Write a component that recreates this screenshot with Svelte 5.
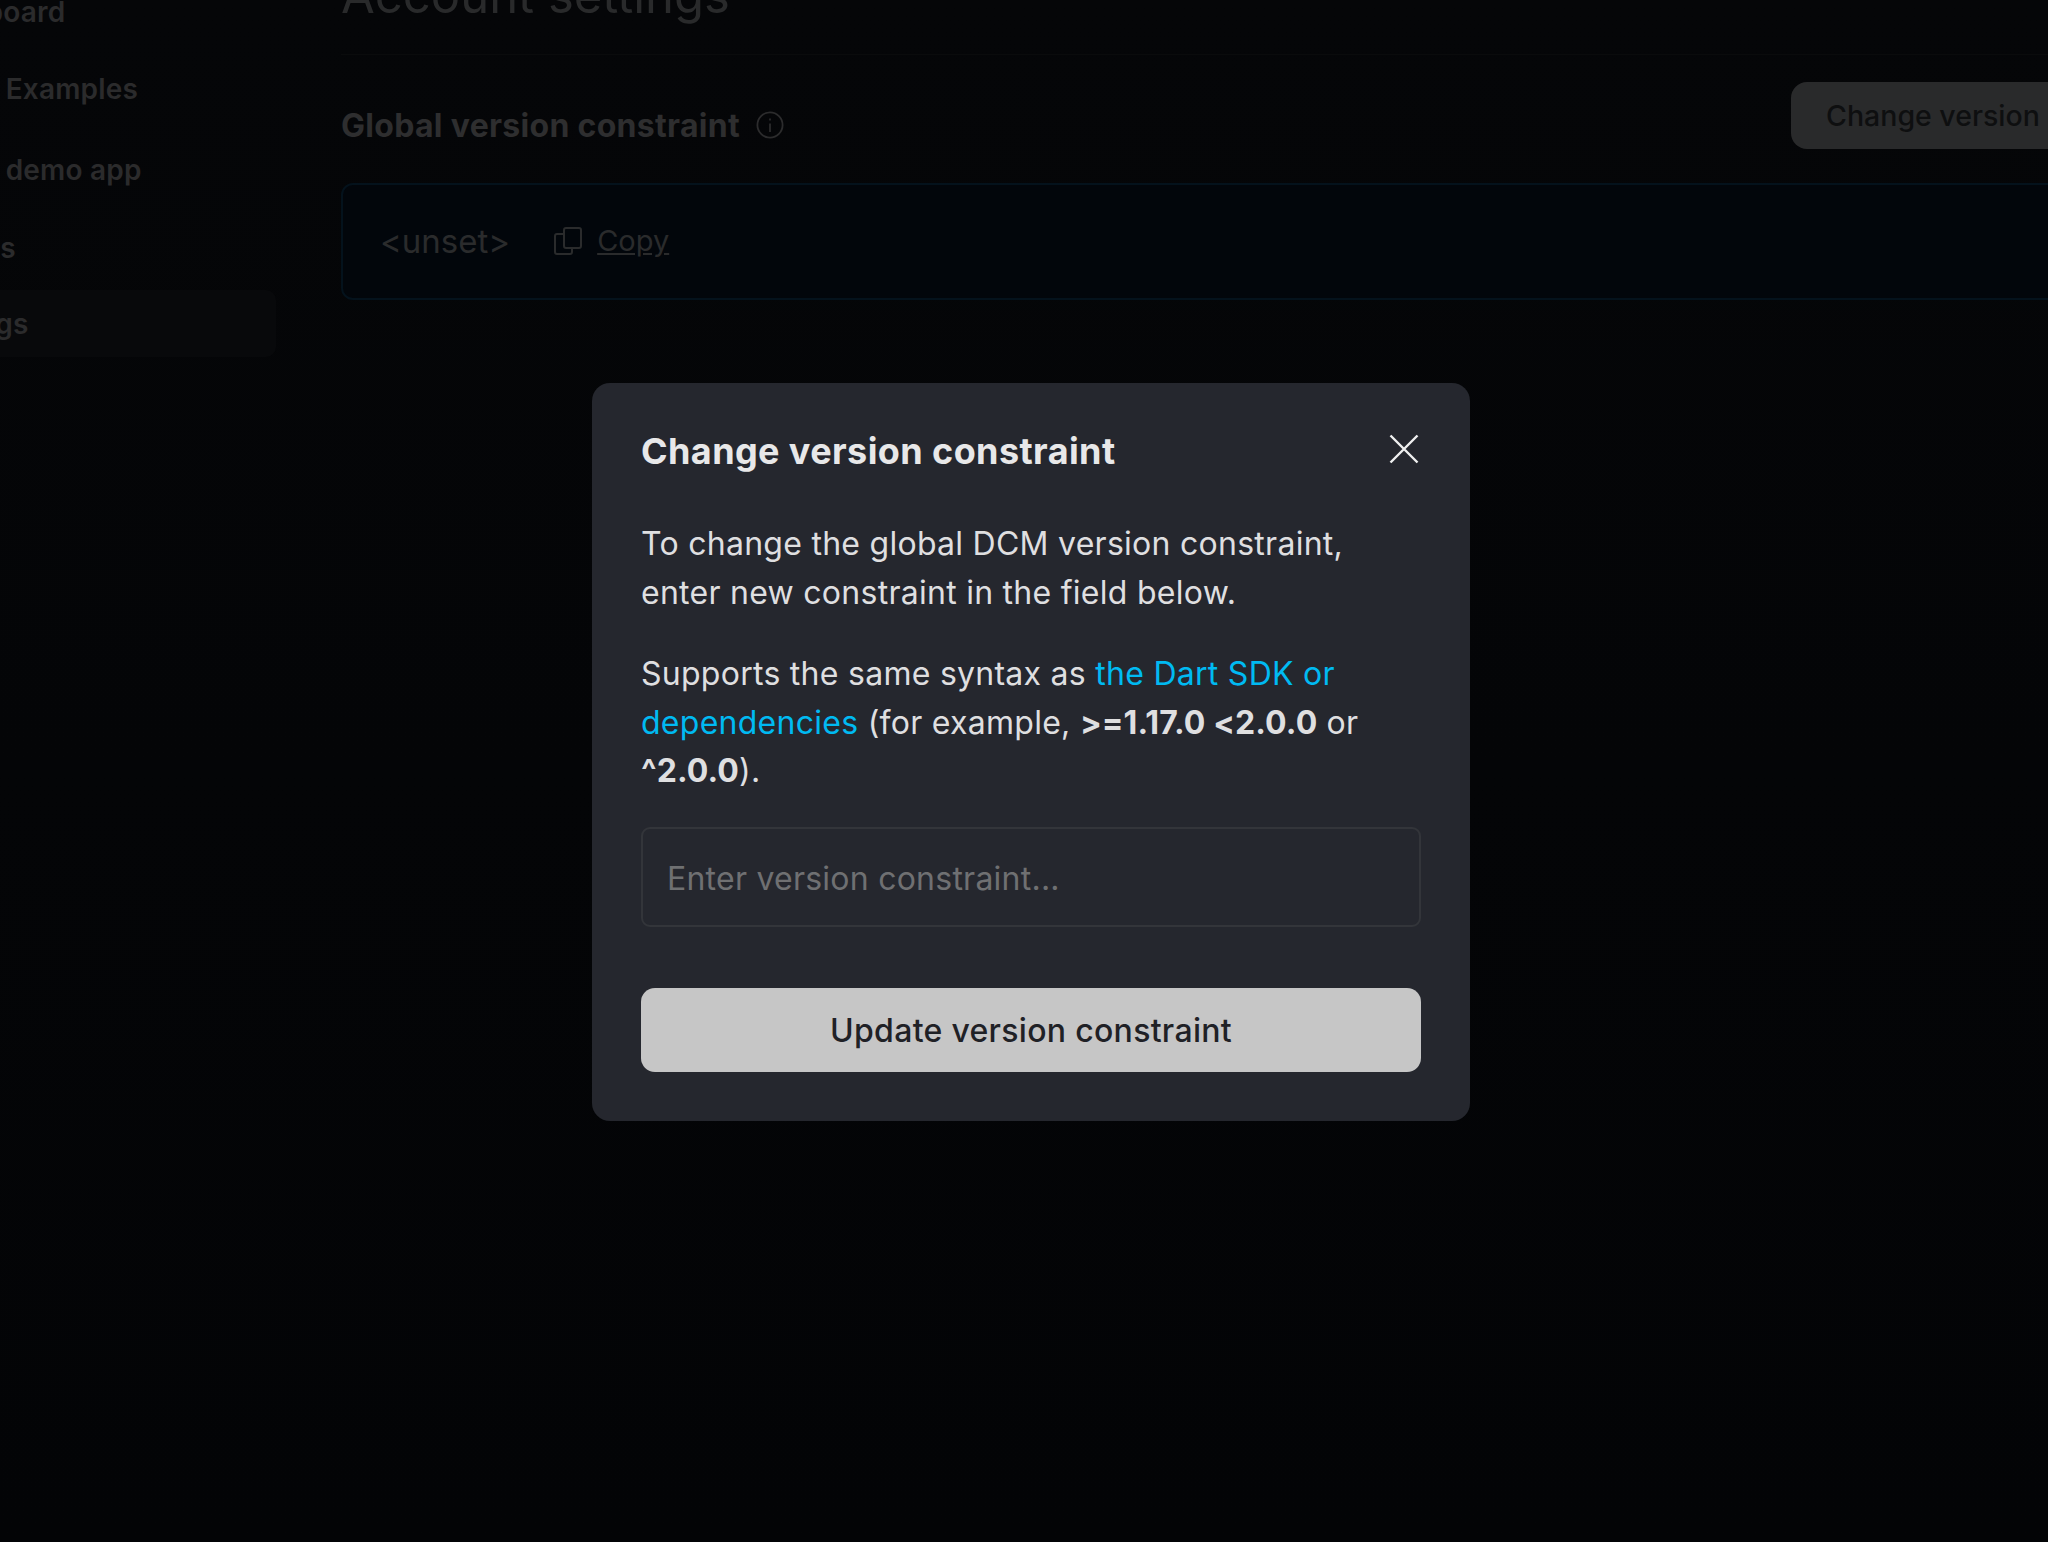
<script>
  const nav = [
    { prefix: '', label: 'Dashboard', cls: '' },
    { prefix: 'Rules', label: 'Examples', cls: '' },
    { prefix: 'Rules', label: 'demo app', cls: 'section' },
    { prefix: '', label: 'Groups', cls: '' },
    { prefix: '', label: 'Settings', cls: 'active' }
  ];
</script>

<div class="screen">
  <div class="page">
    <nav class="sidebar">
      {#each nav as item}
        <div class="item {item.cls}">{#if item.prefix}<span class="prefix">{item.prefix}</span>{/if}<span>{item.label}</span></div>
      {/each}
    </nav>
    <main class="main">
      <h1>Account settings</h1>
      <div class="section-head">
        <div class="section-title">
          <h2>Global version constraint</h2>
          <svg class="info" viewBox="0 0 28 28" width="28" height="28" fill="none" stroke="currentColor" stroke-width="1.8">
            <circle cx="14" cy="14" r="12.6" />
            <path d="M14 12.5V21" />
            <path d="M14 7.5V9.5" />
          </svg>
        </div>
        <button class="change">Change version constraint</button>
      </div>
      <div class="card">
        <span class="value">&lt;unset&gt;</span>
        <svg class="copy" viewBox="0 0 28 28" width="28" height="28" fill="none" stroke="currentColor" stroke-width="2">
          <path d="M9 7H3a2 2 0 0 0-2 2v16a2 2 0 0 0 2 2h13a2 2 0 0 0 2-2v-4" />
          <rect x="10" y="1" width="17" height="20" rx="2" />
        </svg>
        <a class="copy-link" href="#copy">Copy</a>
      </div>
    </main>
  </div>

  <div class="overlay">
    <div class="modal">
      <div class="modal-head">
        <h3>Change version constraint</h3>
        <svg class="close" viewBox="0 0 30 30" width="30" height="30" fill="none" stroke="currentColor" stroke-width="2.4">
          <path d="M1.5 1.5L28.5 28.5M28.5 1.5L1.5 28.5" />
        </svg>
      </div>
      <p>To change the global DCM version constraint,<br />enter new constraint in the field below.</p>
      <p>Supports the same syntax as <a href="#dart">the Dart SDK or dependencies</a> (for example, <b>&gt;=1.17.0 &lt;2.0.0</b> or <b>^2.0.0</b>).</p>
      <input class="field" placeholder="Enter version constraint..." />
      <button class="submit">Update version constraint</button>
    </div>
  </div>
</div>

<style>
  :global(body) {
    margin: 0;
    background: #040507;
  }
  .screen {
    position: relative;
    width: 2048px;
    height: 1542px;
    overflow: hidden;
    background: linear-gradient(#050608, #030406);
    font-family: Inter, "Liberation Sans", sans-serif;
  }
  .page {
    display: flex;
    margin-left: -84px;
    width: 2298px;
  }
  .sidebar {
    width: 360px;
    flex: none;
    margin-top: -22px;
    display: flex;
    flex-direction: column;
    gap: 10px;
  }
  .item {
    height: 67px;
    display: flex;
    align-items: center;
    border-radius: 10px;
    color: #2b2b2c;
    font-size: 28px;
    font-weight: 600;
    letter-spacing: 0.2px;
    white-space: nowrap;
  }
  .prefix {
    margin-right: 14px;
  }
  .item.section {
    margin-top: 4px;
    margin-bottom: 1px;
  }
  .item.active {
    margin-top: -1px;
    background: #08090b;
  }
  .main {
    margin-left: 65px;
    flex: 1;
    margin-top: -34px;
  }
  h1 {
    margin: 0;
    height: 88px;
    line-height: 60px;
    font-size: 49px;
    font-weight: 400;
    color: #292a2b;
    border-bottom: 1px solid #0a0b0c;
  }
  .section-head {
    display: flex;
    justify-content: space-between;
    margin-top: 27px;
    height: 101px;
  }
  .section-title {
    display: flex;
    align-items: center;
    gap: 16px;
    height: 86px;
  }
  h2 {
    margin: 0;
    font-size: 32px;
    font-weight: 700;
    letter-spacing: 0.3px;
    color: #2e2e2f;
  }
  .info {
    color: #2c2c2d;
  }
  .change {
    margin-left: auto;
    width: 423px;
    height: 67px;
    padding: 0 0 0 35px;
    text-align: left;
    border: 0;
    border-radius: 16px;
    background: #292a2b;
    color: #0e0f10;
    font: 500 28.5px Inter, "Liberation Sans", sans-serif;
    white-space: nowrap;
  }
  .card {
    display: flex;
    align-items: center;
    height: 117px;
    padding: 0 0 2px 37px;
    box-sizing: border-box;
    background: #02060b;
    border: 2px solid #04121c;
    border-radius: 12px;
    color: #2a2b2c;
    font-size: 33px;
  }
  .copy {
    margin-left: 44px;
    color: #2a2b2c;
  }
  .copy-link {
    margin-left: 15px;
    color: #2a2b2c;
    font-size: 29px;
  }
  .overlay {
    position: absolute;
    inset: 0;
    display: flex;
    justify-content: center;
    align-items: flex-start;
    padding: 383px 0 0 14px;
    box-sizing: border-box;
  }
  .modal {
    box-sizing: border-box;
    width: 878px;
    height: 738px;
    padding: 49px;
    background: #25272e;
    border-radius: 18px;
    color: #dfdfe0;
    font-size: 32px;
    line-height: 48.6px;
    letter-spacing: 0.27px;
  }
  .modal-head {
    display: flex;
    justify-content: space-between;
    align-items: flex-start;
  }
  h3 {
    margin: -1px 0 0;
    font-size: 36px;
    font-weight: 700;
    line-height: 40px;
    letter-spacing: 0.4px;
    color: #e8e8e9;
  }
  .close {
    color: #f0f0f0;
    margin: 2px 2px 0 0;
  }
  p {
    margin: 49px 0 0;
  }
  p + p {
    margin-top: 33px;
  }
  p a {
    color: #00baf2;
    text-decoration: none;
  }
  p b {
    font-weight: 700;
    letter-spacing: 0.1px;
  }
  .field {
    display: block;
    box-sizing: border-box;
    width: 100%;
    height: 100px;
    margin-top: 31px;
    padding: 3px 24px 0;
    background: transparent;
    border: 2px solid #33353a;
    border-radius: 9px;
    font: 400 32px Inter, "Liberation Sans", sans-serif;
    letter-spacing: 0.24px;
    color: #e4e4e5;
    outline: none;
  }
  .field::placeholder {
    color: #6f7072;
    opacity: 1;
  }
  .submit {
    display: block;
    width: 100%;
    height: 84px;
    margin-top: 61px;
    padding-top: 2px;
    border: 0;
    border-radius: 14px;
    background: #c6c6c6;
    color: #1f2126;
    font: 500 32px Inter, "Liberation Sans", sans-serif;
    letter-spacing: 0.3px;
  }
</style>
